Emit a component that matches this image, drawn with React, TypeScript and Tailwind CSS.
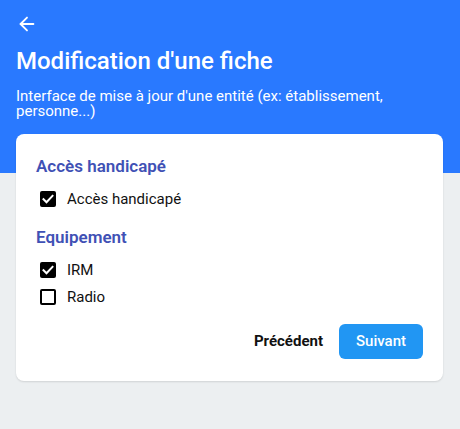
import { ArrowLeft } from "lucide-react";

type Option = { label: string; checked: boolean };

const sections: { title: string; options: Option[] }[] = [
  { title: "Accès handicapé", options: [{ label: "Accès handicapé", checked: true }] },
  {
    title: "Equipement",
    options: [
      { label: "IRM", checked: true },
      { label: "Radio", checked: false },
    ],
  },
];

function Box({ checked }: { checked: boolean }) {
  if (!checked) {
    return <span className="block h-4 w-4 rounded-[2px] border-2 border-black bg-white" />;
  }
  return (
    <span className="flex h-4 w-4 items-center justify-center rounded-[2px] bg-black">
      <svg viewBox="0 0 16 16" className="h-4 w-4" fill="none">
        <path d="M3.5 8.2l3 3 6-6.4" stroke="white" strokeWidth="2" strokeLinecap="square" />
      </svg>
    </span>
  );
}

export default function App() {
  return (
    <div className="min-h-[580px] bg-[#eceff1] font-['Roboto',sans-serif]">
      {/* Header */}
      <div className="h-[173px] bg-[#2979ff] px-4 pt-[13px] text-white">
        <button className="flex h-[22px] w-[22px] items-center justify-center">
          <ArrowLeft size={22} strokeWidth={2} />
        </button>
        <h1 className="mt-[10px] text-[24px] font-medium leading-8">Modification d'une fiche</h1>
        <p className="mt-[12px] text-[15px] leading-[15px]">
          Interface de mise à jour d'une entité (ex: établissement, personne...)
        </p>
      </div>

      {/* Form card */}
      <div className="ml-4 mr-[17px] -mt-[39px] rounded-lg bg-white px-5 pb-[22px] pt-5 shadow-[0_1px_2px_rgba(0,0,0,0.12)]">
        {sections.map((s, i) => (
          <div key={s.title} className={i > 0 ? "mt-[14px]" : ""}>
            <h2 className="text-[17px] font-semibold leading-6 text-[#3f51b5]">{s.title}</h2>
            <div className="mt-[9px] flex flex-col gap-[3px]">
              {s.options.map((o) => (
                <label key={o.label} className="flex h-6 items-center gap-[11px] pl-1">
                  <Box checked={o.checked} />
                  <span className="text-[15px] text-[#111]">{o.label}</span>
                </label>
              ))}
            </div>
          </div>
        ))}

        <div className="mt-[15px] flex items-center justify-end gap-4">
          <button className="text-[15px] font-bold text-[#111]">Précédent</button>
          <button className="h-[35px] rounded-md bg-[#2196f3] px-[17px] text-[15px] font-medium text-white">
            Suivant
          </button>
        </div>
      </div>
    </div>
  );
}
